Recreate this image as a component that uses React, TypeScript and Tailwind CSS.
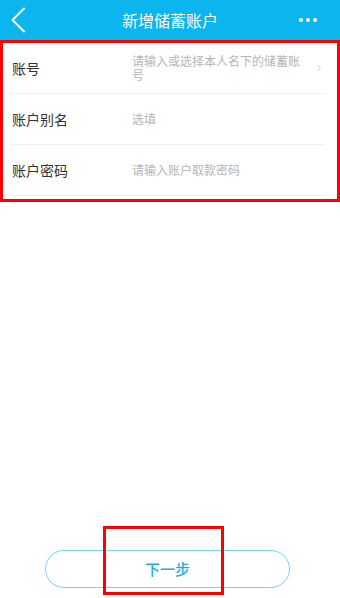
import { ChevronRight } from 'lucide-react';

const rows = [
  { label: '账号', placeholder: '请输入或选择本人名下的储蓄账号', arrow: true },
  { label: '账户别名', placeholder: '选填', arrow: false },
  { label: '账户密码', placeholder: '请输入账户取款密码', arrow: false },
];

export default function App() {
  return (
    <div
      className="flex h-[598px] w-[340px] flex-col bg-white"
      style={{ fontFamily: '"Noto Sans CJK SC", "Noto Sans", sans-serif' }}
    >
      <header className="flex h-10 shrink-0 items-center justify-between bg-[#0db5ef] text-white">
        <div className="flex w-[60px] items-center pl-[11px]">
          {/* tall thin back arrow */}
          <svg width="15" height="26" viewBox="0 0 15 26" fill="none">
            <polyline points="13,1.5 1.5,13 13,24.5" stroke="white" strokeWidth="2" strokeLinecap="round" strokeLinejoin="round" />
          </svg>
        </div>
        <h1 className="text-[16px] leading-none">新增储蓄账户</h1>
        <div className="flex w-[60px] items-center justify-end gap-[3px] pr-[23px]">
          <span className="h-[4px] w-[4px] rounded-full bg-white"></span>
          <span className="h-[4px] w-[4px] rounded-full bg-white"></span>
          <span className="h-[4px] w-[4px] rounded-full bg-white"></span>
        </div>
      </header>

      <section className="border-[3px] border-[#ff0000] pb-[3px]">
        {rows.map((row) => (
          <div
            key={row.label}
            className="ml-[7px] mr-[12px] flex h-[51px] items-center border-b border-[#f0f0f0] pl-[2px]"
          >
            <span className="w-[120px] shrink-0 text-[14px] text-[#333]">{row.label}</span>
            <span className="w-[172px] text-[12px] leading-[14px] text-[#b5b5b5]">{row.placeholder}</span>
            {row.arrow && <ChevronRight size={12} strokeWidth={1.5} className="ml-auto text-[#bdbdbd]" />}
          </div>
        ))}
      </section>

      <div className="relative mb-[10px] ml-[45px] mt-auto">
        <button className="flex h-[38px] w-[245px] items-center justify-center rounded-full border-[1.5px] border-[#72d4f7] text-[15px] font-medium text-[#19aee6]">
          下一步
        </button>
        <div className="absolute left-[58px] top-[-24px] h-[69px] w-[121px] border-[3px] border-[#ff0000]"></div>
      </div>
    </div>
  );
}
